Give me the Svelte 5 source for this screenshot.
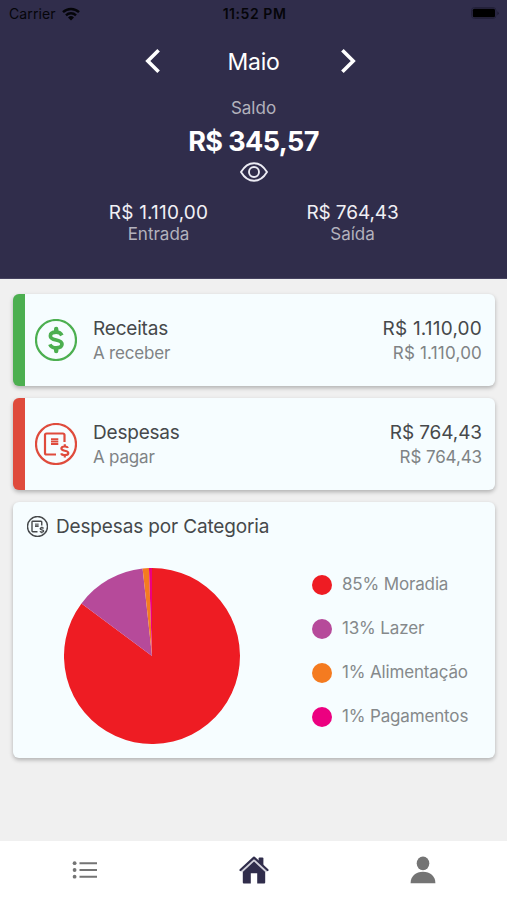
<script lang="ts">
  interface Category {
    name: string;
    percent: number;
    share: number;
    color: string;
  }

  const month = 'Maio';

  const entries = [
    { kind: 'income', title: 'Receitas', hint: 'A receber', total: 'R$ 1.110,00', pending: 'R$ 1.110,00' },
    { kind: 'expense', title: 'Despesas', hint: 'A pagar', total: 'R$ 764,43', pending: 'R$ 764,43' },
  ];

  const categories: Category[] = [
    { name: 'Moradia', percent: 85, share: 0.852, color: '#ee1c23' },
    { name: 'Lazer', percent: 13, share: 0.131, color: '#b64a9a' },
    { name: 'Alimentação', percent: 1, share: 0.0115, color: '#f47b20' },
    { name: 'Pagamentos', percent: 1, share: 0.0055, color: '#ec0080' },
  ];

  const R = 88;

  const point = (t: number): string => {
    const a = t * Math.PI * 2;
    return `${(R + R * Math.sin(a)).toFixed(2)} ${(R - R * Math.cos(a)).toFixed(2)}`;
  };

  // Slices run clockwise from twelve o'clock
  let acc = 0;
  const slices = categories.map((c) => {
    const from = acc;
    acc += c.share;
    const large = c.share > 0.5 ? 1 : 0;
    return { color: c.color, d: `M${R} ${R}L${point(from)}A${R} ${R} 0 ${large} 1 ${point(acc)}Z` };
  });
</script>

{#snippet billIcon()}
  <svg class="bill" viewBox="0 0 42 42" fill="none" stroke="currentColor" aria-hidden="true">
    <circle cx="21" cy="21" r="20" />
    <path d="M21 31.5H11.5a1.5 1.5 0 0 1-1.5-1.5V12a1.5 1.5 0 0 1 1.5-1.5H28a1.5 1.5 0 0 1 1.5 1.5V19" />
    <path d="M16 16.2H23.3M16 18.6H23.3M16 21H23.3" stroke-width="1.9" />
    <path
      d="M33 24.9C32.5 23.8 31.2 23.5 29.7 23.5C27.7 23.5 26.4 24.2 26.4 25.6C26.4 28.6 33.3 26.8 33.3 30.1C33.3 31.5 31.8 32.2 29.8 32.2C28 32.2 26.6 31.7 26.1 30.4M29.8 21.3V23.5M29.8 32.2V34.5"
    />
  </svg>
{/snippet}

<div class="screen">
  <header class="top">
    <div class="status">
      <div class="carrier">
        <span>Carrier</span>
        <svg width="18" height="14" viewBox="0 0 18 14" aria-hidden="true">
          <g fill="none" stroke="#050509" stroke-width="2.4">
            <path d="M1 5.2A11.5 11.5 0 0 1 17 5.2" />
            <path d="M4 8.3A7.2 7.2 0 0 1 14 8.3" />
          </g>
          <path d="M9 13.6L6 10.4A4.3 4.3 0 0 1 12 10.4Z" fill="#050509" />
        </svg>
      </div>
      <span class="clock">11:52 PM</span>
      <svg class="battery" width="29" height="13" viewBox="0 0 29 13" aria-hidden="true">
        <rect x="0.5" y="0.5" width="24.5" height="11" rx="3" fill="none" stroke="#23213a" />
        <rect x="1.8" y="1.8" width="22.2" height="8.4" rx="1.5" fill="#000" />
        <path d="M26.4 4.3V8.2Q27.7 7.3 27.7 6.2T26.4 4.3Z" fill="#1c1a30" />
      </svg>
    </div>

    <nav class="month">
      <button type="button" aria-label="Mês anterior">
        <svg width="16" height="26" viewBox="0 0 16 26"><path d="M13.6 2.2L2.8 13L13.6 23.8" /></svg>
      </button>
      <h1>{month}</h1>
      <button type="button" aria-label="Próximo mês">
        <svg width="16" height="26" viewBox="0 0 16 26"><path d="M2.4 2.2L13.2 13L2.4 23.8" /></svg>
      </button>
    </nav>

    <div class="balance">
      <span class="label">Saldo</span>
      <strong>R$ 345,57</strong>
      <svg width="28" height="20" viewBox="0 0 28 20" fill="none" stroke="#ececf4" stroke-width="1.9" aria-hidden="true">
        <path d="M1 10C4.5 4.2 9 1.2 14 1.2S23.5 4.2 27 10C23.5 15.8 19 18.8 14 18.8S4.5 15.8 1 10Z" stroke-linejoin="round" />
        <circle cx="14" cy="10" r="5" />
      </svg>
    </div>

    <div class="flows">
      <div class="flow">
        <span class="amount wide">R$ 1.110,00</span>
        <span class="label">Entrada</span>
      </div>
      <div class="flow">
        <span class="amount">R$ 764,43</span>
        <span class="label">Saída</span>
      </div>
    </div>
  </header>

  <main>
    {#each entries as e (e.kind)}
      <section class="card entry {e.kind}">
        <div class="icon">
          {#if e.kind === 'income'}
            <svg width="42" height="42" viewBox="0 0 42 42" fill="none" stroke="currentColor" aria-hidden="true">
              <circle cx="21" cy="21" r="20" stroke-width="2.2" />
              <path
                d="M26.9 16.4C25.8 14.1 23.8 13.2 21.2 13.2C17.8 13.2 15.4 14.5 15.4 16.9C15.4 22.5 27 19.5 27 25.1C27 27.6 24.6 28.9 21.2 28.9C18.2 28.9 15.9 27.9 14.9 25.3"
                stroke-width="3.7"
              />
              <path d="M21.2 10V12.5M21.2 29.5V32" stroke-width="4.4" stroke-linecap="round" />
            </svg>
          {:else}
            {@render billIcon()}
          {/if}
        </div>
        <div class="names">
          <span class="title">{e.title}</span>
          <span class="hint">{e.hint}</span>
        </div>
        <div class="values">
          <span class="title">{e.total}</span>
          <span class="hint">{e.pending}</span>
        </div>
      </section>
    {/each}

    <section class="card chart">
      <h2>{@render billIcon()}<span>Despesas por Categoria</span></h2>
      <div class="chart-body">
        <svg class="pie" width="176" height="176" viewBox="0 0 176 176" role="img" aria-label="Despesas por Categoria">
          {#each slices as s (s.color)}
            <path d={s.d} fill={s.color} />
          {/each}
        </svg>
        <ul>
          {#each categories as c (c.name)}
            <li>
              <span class="dot" style:background={c.color}></span>
              <span class="name">{c.percent}% {c.name}</span>
            </li>
          {/each}
        </ul>
      </div>
    </section>
  </main>

  <nav class="tabs">
    <button type="button" aria-label="Lançamentos">
      <svg width="26" height="20" viewBox="0 0 26 20" fill="#747474" aria-hidden="true">
        <circle cx="2.6" cy="3.2" r="1.9" />
        <circle cx="2.6" cy="10" r="1.9" />
        <circle cx="2.6" cy="16.7" r="1.9" />
        <path d="M7.5 2.2H25V4.2H7.5ZM7.5 9H25V11H7.5ZM7.5 15.7H25V17.7H7.5Z" />
      </svg>
    </button>
    <button type="button" aria-label="Início">
      <svg width="30" height="28" viewBox="0 0 30 28" fill="#302d4b" aria-hidden="true">
        <path d="M15 4L26.2 14.6V26.5Q26.2 27.5 25.2 27.5H18.2V17.3H11.8V27.5H4.8Q3.8 27.5 3.8 26.5V14.600Z" />
        <path d="M2.400 15.600L15 3.800L27.600 15.600" fill="none" stroke="#d3d2db" stroke-width="2.400" />
        <path d="M19.600 2.400Q19.600 1.400 20.600 1.400H23.400Q24.400 1.400 24.400 2.400V10L19.600 5.500Z" />
        <path d="M1.500 14L15 1.600L28.500 14" fill="none" stroke="#302d4b" stroke-width="2.200" stroke-linecap="round" stroke-linejoin="round" />
      </svg>
    </button>
    <button type="button" aria-label="Perfil">
      <svg width="26" height="28" viewBox="0 0 26 28" fill="#747474" aria-hidden="true">
        <ellipse cx="13" cy="7.3" rx="6.3" ry="6.9" />
        <path d="M0.6 27.2C0.6 20 6 15.8 13 15.8S25.4 20 25.4 27.2Z" />
      </svg>
    </button>
  </nav>
</div>

<style>
  :global(body) { margin: 0; }

  .screen {
    height: 900px;
    display: flex;
    flex-direction: column;
    background: #f0f0f0;
    font-family: Inter, Roboto, sans-serif;
    overflow: hidden;
  }
  button {
    display: flex;
    align-items: center;
    justify-content: center;
    padding: 0;
    border: 0;
    background: none;
  }
  svg {
    display: block;
    flex-shrink: 0;
  }

  .top {
    box-sizing: border-box;
    height: 279px;
    background: #302d4b;
    border-bottom: 1px solid #45425f;
    color: #fff;
  }
  .status {
    display: grid;
    grid-template-columns: 1fr auto 1fr;
    align-items: center;
    height: 27px;
    padding: 0 7px 0 9px;
    color: #050509;
    font-size: 14px;
  }
  .carrier {
    display: flex;
    align-items: center;
    gap: 6px;
    letter-spacing: 0.1px;
  }
  .clock {
    font-size: 14px;
    font-weight: 600;
    letter-spacing: 0.55px;
  }
  .battery { justify-self: end; }

  .month {
    display: flex;
    justify-content: space-between;
    align-items: center;
    width: 211px;
    height: 26px;
    margin: 21px auto 0;
    padding-right: 6px;
  }
  .month svg {
    fill: none;
    stroke: #fff;
    stroke-width: 3.6;
  }
  .month h1 {
    margin: 0;
    padding: 2px 0 0 6px;
    font-size: 23px;
    font-weight: 400;
    line-height: 27px;
    letter-spacing: -0.3px;
  }

  .balance {
    display: flex;
    flex-direction: column;
    align-items: center;
    margin-top: 24px;
  }
  .label {
    color: #b3b2bd;
    font-size: 17px;
    line-height: 21px;
  }
  .balance strong {
    margin-top: 5px;
    font-size: 27px;
    font-weight: 700;
    line-height: 36px;
    letter-spacing: -0.6px;
  }
  .balance svg { margin-top: 2px; }

  .flows {
    display: flex;
    justify-content: center;
    margin: 20px 0 0 4px;
  }
  .flow {
    display: flex;
    flex-direction: column;
    align-items: center;
    width: 194px;
  }
  .amount {
    color: #f0f0f5;
    font-size: 19px;
    line-height: 22px;
    letter-spacing: -0.1px;
  }
  .amount.wide { letter-spacing: 0.2px; }

  main {
    flex: 1;
    display: flex;
    flex-direction: column;
    gap: 12px;
    padding: 15px 12px 0 13px;
  }
  .card {
    border-radius: 6px;
    background: #f6fdff;
    box-shadow: 0 2px 4px rgba(0, 0, 0, 0.27);
    color: #46494b;
    overflow: hidden;
  }
  .entry {
    box-sizing: border-box;
    display: flex;
    height: 92px;
    padding-right: 13px;
    border-left: 12px solid #4caf50;
  }
  .entry.expense { border-left-color: #df4b3c; }
  .icon {
    display: flex;
    align-items: center;
    margin: 0 16px 0 10px;
    color: #4caf50;
  }
  .expense .icon { color: #df4b3c; }
  .bill {
    width: 42px;
    height: 42px;
    stroke-width: 2.2;
  }
  .names,
  .values {
    display: flex;
    flex-direction: column;
    padding-top: 22px;
  }
  .names { letter-spacing: -0.2px; }
  .values {
    align-items: flex-end;
    margin-left: auto;
  }
  .income .values { letter-spacing: 0.2px; }
  .expense .values { letter-spacing: -0.1px; }
  .title {
    font-size: 19px;
    line-height: 25px;
  }
  .hint {
    color: #7f8385;
    font-size: 17px;
    line-height: 24px;
  }

  .chart { height: 256px; }
  .chart h2 {
    display: flex;
    align-items: center;
    gap: 8px;
    height: 24px;
    margin: 12px 0 0 14px;
    font-size: 19px;
    font-weight: 400;
    letter-spacing: -0.15px;
  }
  .chart h2 .bill {
    width: 21px;
    height: 21px;
    stroke-width: 2.8;
  }
  .chart-body {
    display: flex;
    padding: 30px 0 0 51px;
  }
  .chart ul {
    display: flex;
    flex-direction: column;
    gap: 22px;
    margin: 6px 0 0 72px;
    padding: 0;
    list-style: none;
  }
  .chart li {
    display: flex;
    align-items: center;
    gap: 10px;
    height: 22px;
    color: #85898b;
    font-size: 17px;
    letter-spacing: -0.15px;
    white-space: nowrap;
  }
  .name { padding-bottom: 2px; }
  .dot {
    width: 20px;
    height: 20px;
    border-radius: 50%;
  }

  .tabs {
    box-sizing: border-box;
    display: grid;
    grid-template-columns: repeat(3, 1fr);
    height: 59px;
    padding-bottom: 2px;
    background: #fff;
  }
</style>
